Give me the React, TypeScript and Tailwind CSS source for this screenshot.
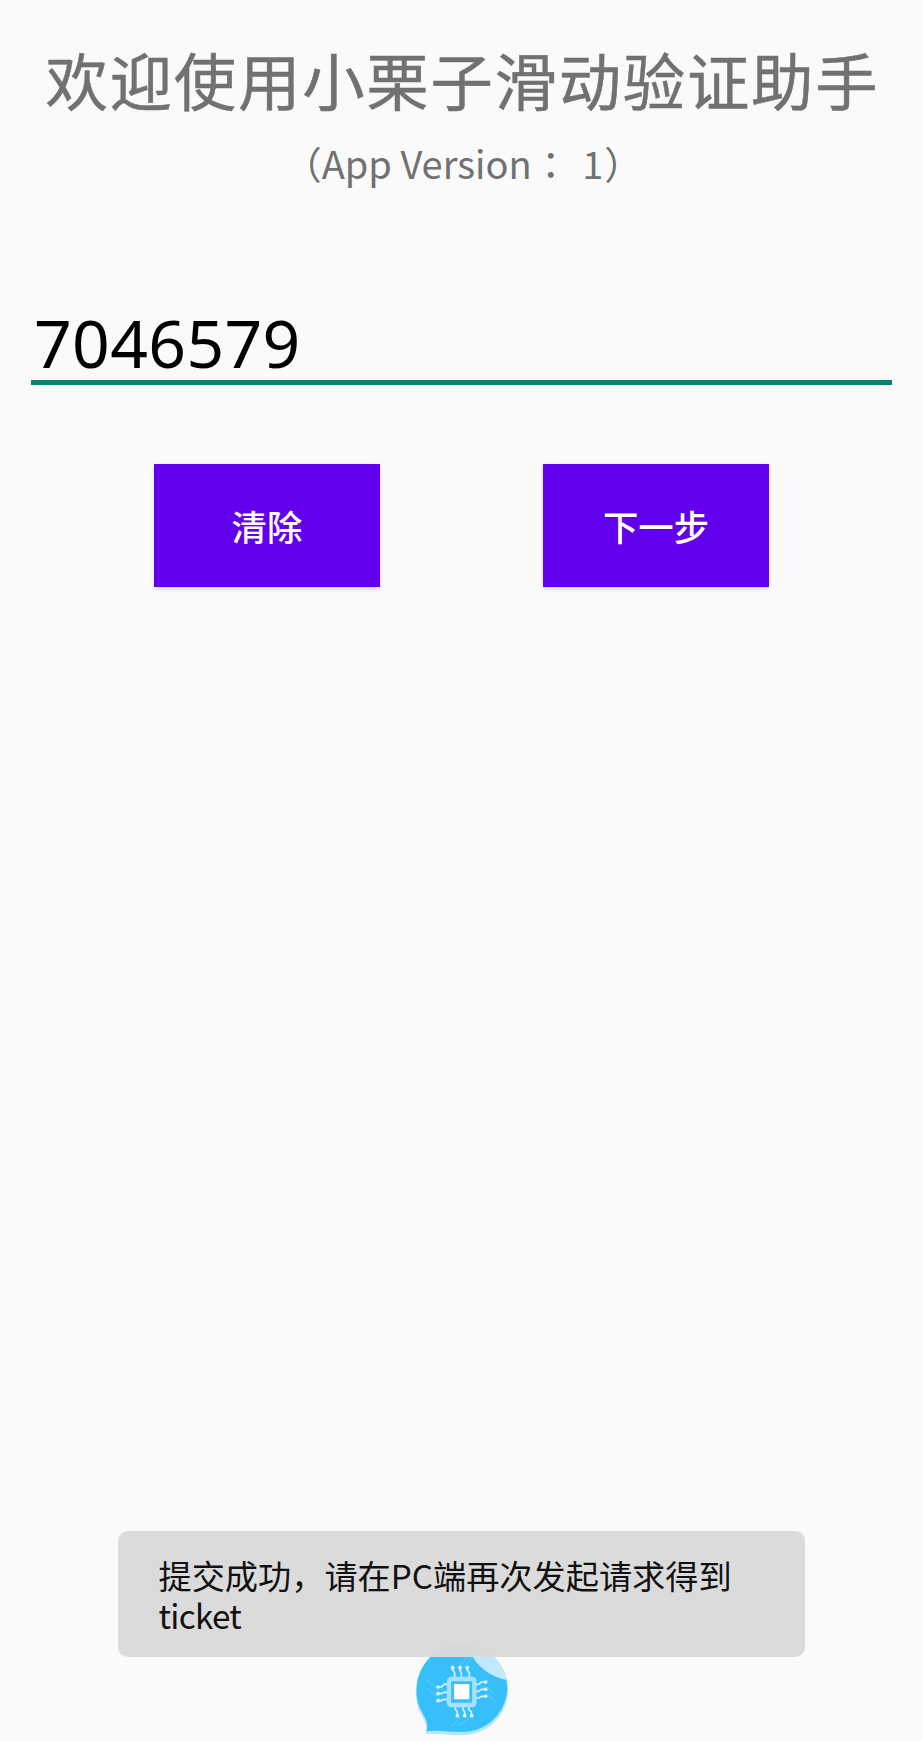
import { useState } from "react";

const ChipLogo = () => (
  <svg viewBox="45 39 282 282" className="h-[94px] w-[94px]" fill="none">
    <path
      d="M76 312C84 292 76 275 63 252C50 229 46 200 50 168C57 100 112 43 184 43C262 43 324 104 324 178C324 258 262 316 184 316C146 316 110 308 76 312Z"
      fill="#b4e6fd"
    />
    <path
      d="M79 304C86 286 80 270 66 246C54 226 47 200 50 168C57 100 112 43 184 43C262 43 322 104 322 176C318 248 262 306 184 306C146 306 112 299 79 304Z"
      fill="#37bffc"
    />
    <path d="M207 45C266 54 310 96 321 150C282 142 243 122 218 80C210 68 206 56 207 45Z" fill="#bfeafd" />
    <g stroke="#7dd5ff" strokeWidth="2">
      <path d="M217 82L192 110M203 82L178 107M82 150L108 174M82 175L110 199M260 170L287 196M260 190L287 215M180 263L154 289M207 263L177 287" />
    </g>
    <g stroke="#d6f3ff" strokeWidth="5">
      <path d="M158 114V120L164 128V144M180 114V120L184 128V144M202 114V120L208 128V144" />
      <path d="M166 230V238L172 246V256M189 230V238L194 246V256M206 230V238L214 246V256" />
      <path d="M114 171H124L132 163H144M114 191H124L132 187H144M114 212H124L132 208H144" />
      <path d="M226 163H236L244 156H256M226 184H236L244 178H256M226 204H236L244 199H256" />
    </g>
    <g fill="#e6f8ff">
      <circle cx="158" cy="113" r="5.5" />
      <circle cx="180" cy="113" r="5.5" />
      <circle cx="202" cy="113" r="5.5" />
      <circle cx="172" cy="257" r="5.5" />
      <circle cx="194" cy="257" r="5.5" />
      <circle cx="215" cy="257" r="5.5" />
      <circle cx="114" cy="171" r="5.5" />
      <circle cx="114" cy="191" r="5.5" />
      <circle cx="114" cy="212" r="5.5" />
      <circle cx="257" cy="156" r="5.5" />
      <circle cx="257" cy="178" r="5.5" />
      <circle cx="257" cy="199" r="5.5" />
    </g>
    <rect x="147" y="147" width="76" height="78" rx="6" stroke="#a6e2fe" strokeWidth="13" />
    <rect x="162" y="162" width="46" height="46" rx="3" fill="#fff" />
  </svg>
);

interface ActionButtonProps {
  label: string;
  onClick?: () => void;
}

const ActionButton = ({ label, onClick }: ActionButtonProps) => (
  <button
    onClick={onClick}
    className="h-[123px] w-[226px] bg-[#6200ee] text-[35.4px] font-medium text-white shadow-[0_2px_4px_rgba(0,0,0,0.16)]"
  >
    {label}
  </button>
);

const App = () => {
  const [code, setCode] = useState("7046579");

  return (
    <div className="flex h-[1741px] w-[922px] flex-col bg-[#fafafa] font-['Noto_Sans_CJK_SC',sans-serif]">
      {/* Header */}
      <header className="flex flex-col items-center text-[#717171]">
        <h1 className="mt-[33px] h-[92px] whitespace-nowrap pl-[3px] text-[62.4px] leading-[92px] tracking-[1.75px] [-webkit-text-stroke:0.5px_#717171]">
          欢迎使用小栗子滑动验证助手
        </h1>
        <p className="mt-[10px] flex h-[56px] whitespace-pre pl-1 text-[38px] leading-[56px]">
          <span>（App Version</span>
          <span className="font-['Noto_Sans_CJK_TC',sans-serif]">：</span>
          <span className="ml-[4px]"> 1</span>
          <span className="ml-[1px]">）</span>
        </p>
      </header>

      <main className="flex flex-col">
        <input
          value={code}
          onChange={(e) => setCode(e.target.value)}
          className="ml-[31px] mr-[30px] mt-[108px] h-[86px] border-b-[5px] border-[#018474] bg-transparent pl-[3px] pt-1 font-['Noto_Sans',sans-serif] text-[66px] leading-[76px] tracking-[0.35px] text-black outline-none"
        />
        <div className="mt-[79px] flex justify-center gap-[163px] pl-px">
          <ActionButton label="清除" onClick={() => setCode("")} />
          <ActionButton label="下一步" />
        </div>
      </main>

      {/* Toast, overlaps the top of the logo */}
      <footer className="mt-auto flex flex-col items-center">
        <div className="z-10 h-[126px] w-[687px] rounded-[10px] bg-[#dadada]/97 px-[41px] pt-[24px] text-[33.2px] leading-[40px] text-[#111]">
          <p>
            提交成功，请在PC端再次发起请求得到<span className="tracking-[-0.7px]">ticket</span>
          </p>
        </div>
        <div className="-mt-[14px] mb-[4px] pl-[2px]">
          <ChipLogo />
        </div>
      </footer>
    </div>
  );
};

export default App;
